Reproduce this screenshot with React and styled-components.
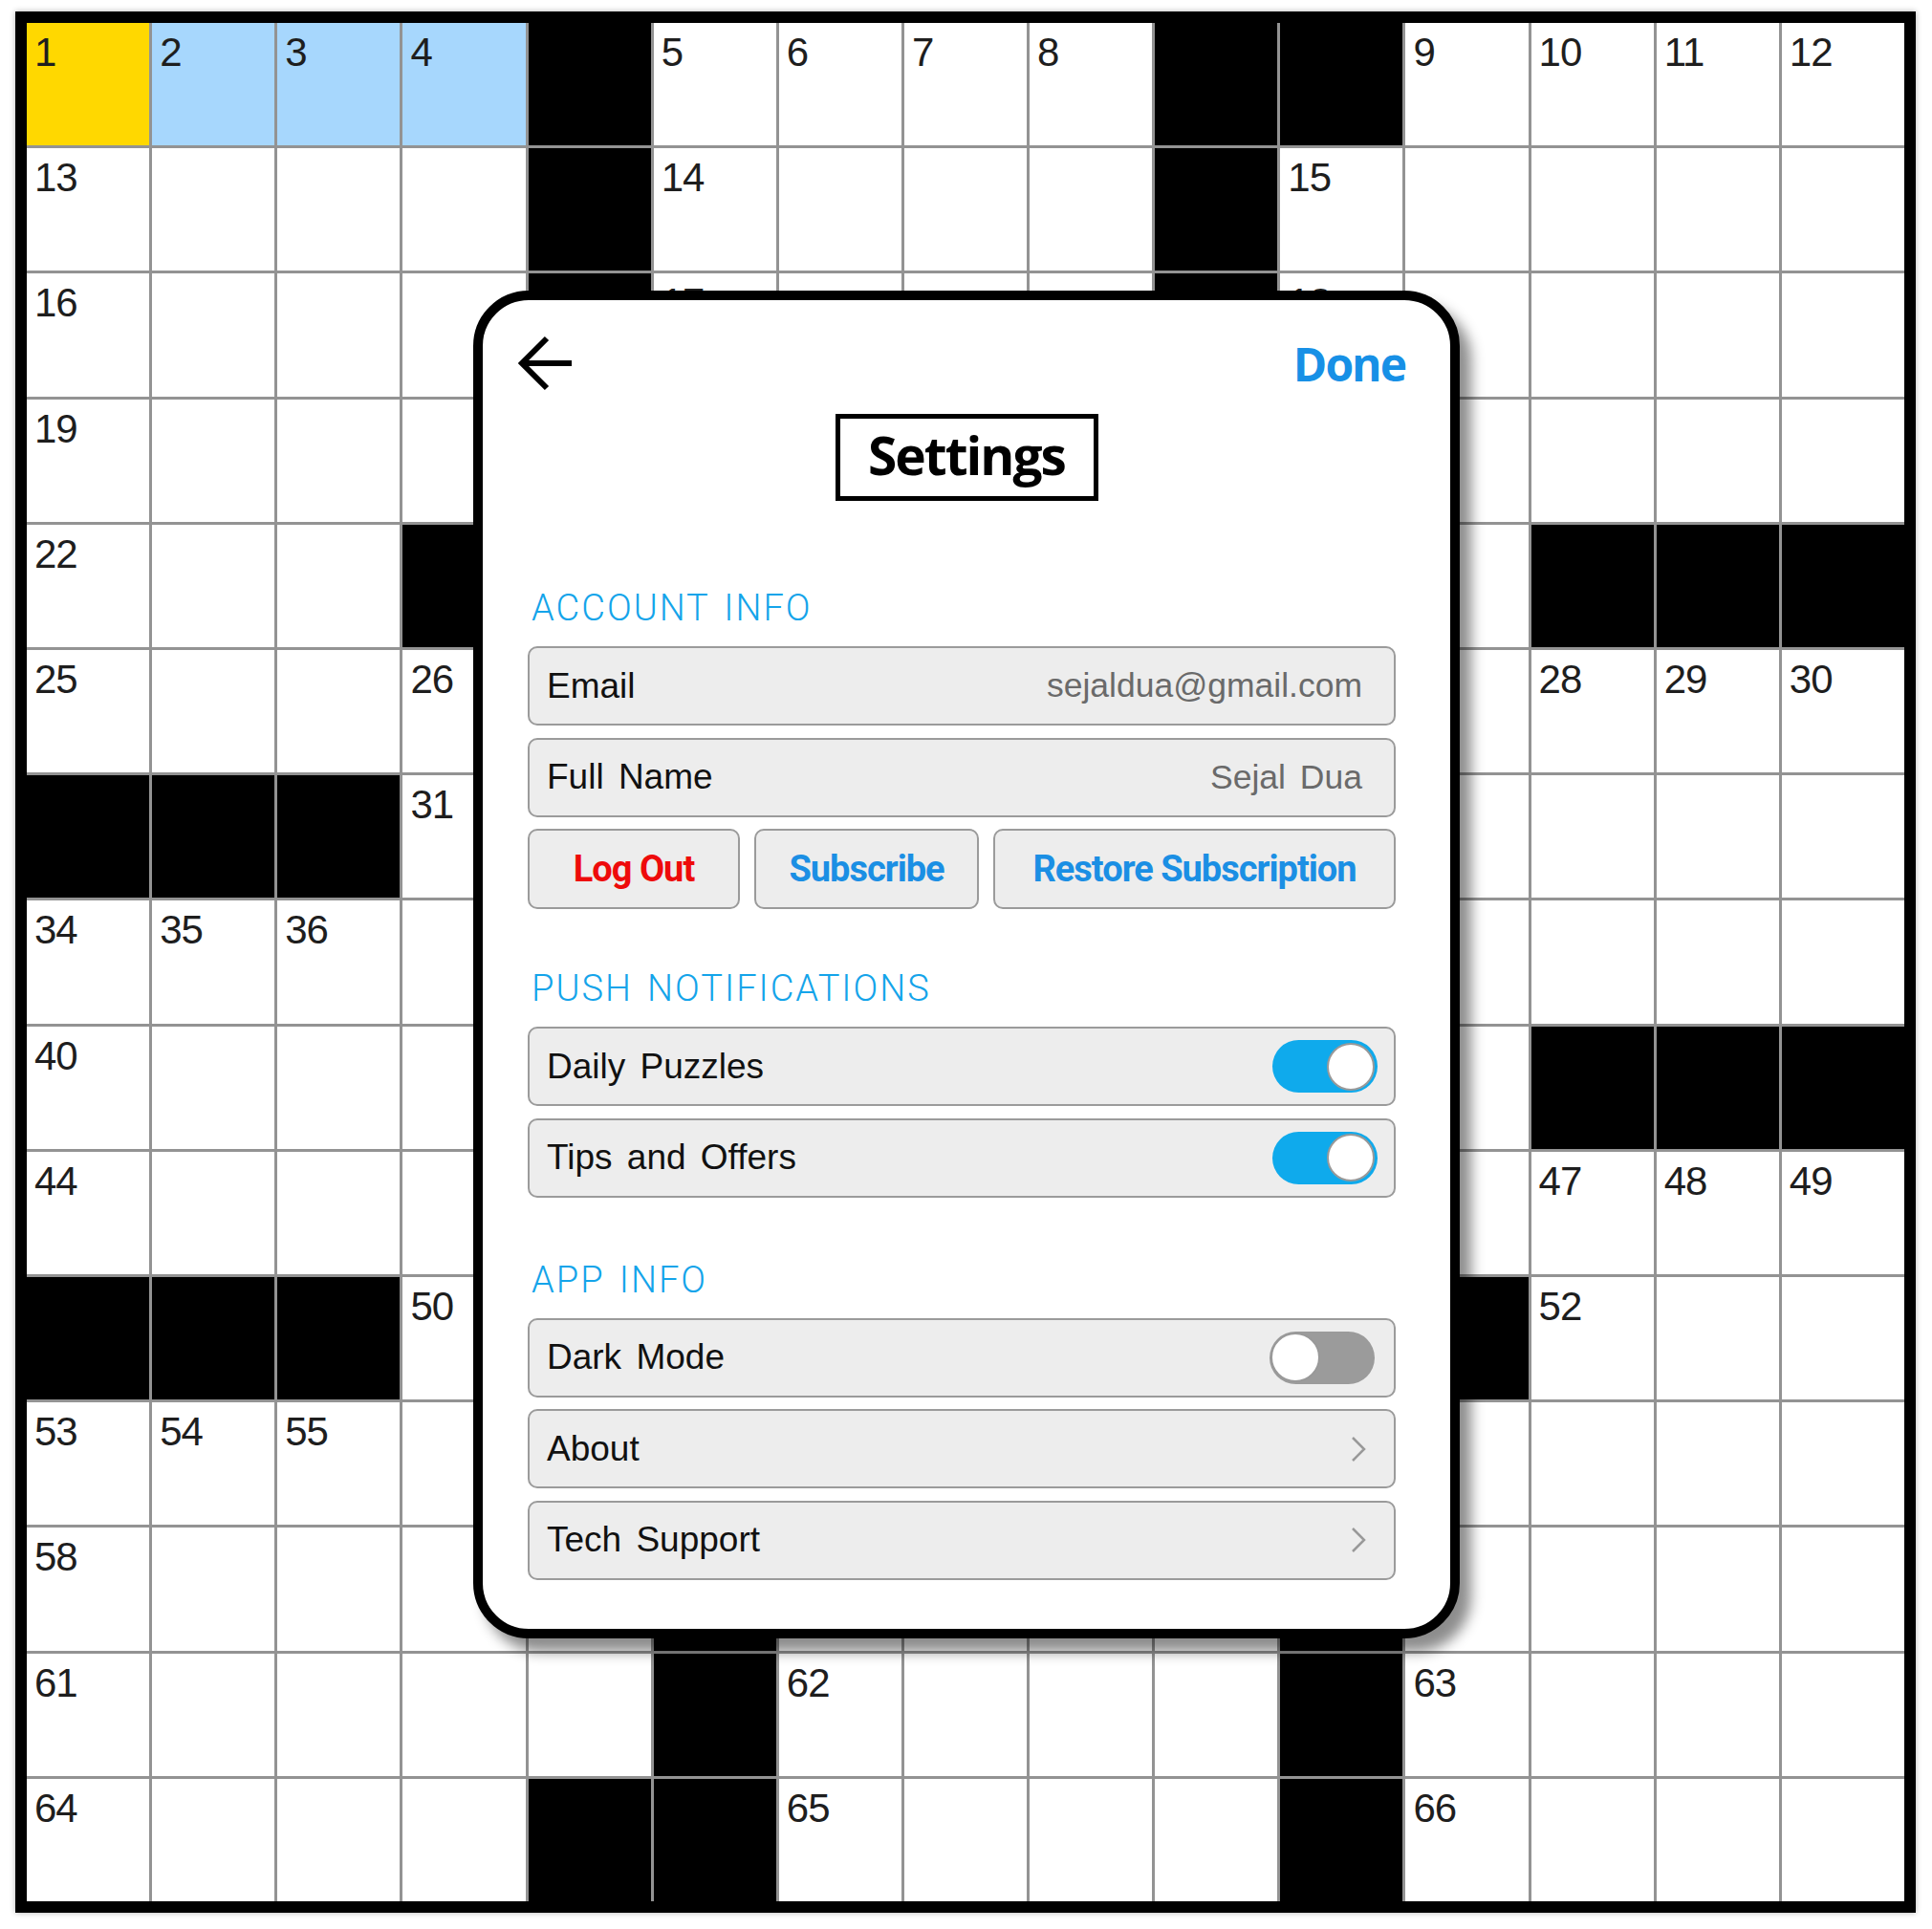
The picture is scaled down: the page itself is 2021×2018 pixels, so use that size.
import React from 'react'
import styled, { createGlobalStyle } from 'styled-components'

const GlobalStyle = createGlobalStyle`
  html, body {
    margin: 0;
    padding: 0;
    background: #fff;
  }
  body {
    width: 2021px;
    height: 2018px;
    overflow: hidden;
    font-family: "Liberation Sans", Arial, sans-serif;
  }
`

// black squares per row, column indexes
const BLACK = {
  0: [4, 9, 10],
  1: [4, 9],
  2: [4, 9],
  4: [3, 12, 13, 14],
  6: [0, 1, 2],
  8: [12, 13, 14],
  10: [0, 1, 2, 11],
  12: [5, 10],
  13: [5, 10],
  14: [4, 5, 10],
}

const NUMBERS = {
  '0,0': 1, '0,1': 2, '0,2': 3, '0,3': 4, '0,5': 5, '0,6': 6, '0,7': 7, '0,8': 8,
  '0,11': 9, '0,12': 10, '0,13': 11, '0,14': 12,
  '1,0': 13, '1,5': 14, '1,10': 15,
  '2,0': 16, '2,5': 17, '2,10': 18,
  '3,0': 19,
  '4,0': 22,
  '5,0': 25, '5,3': 26, '5,12': 28, '5,13': 29, '5,14': 30,
  '6,3': 31,
  '7,0': 34, '7,1': 35, '7,2': 36,
  '8,0': 40,
  '9,0': 44, '9,12': 47, '9,13': 48, '9,14': 49,
  '10,3': 50, '10,12': 52,
  '11,0': 53, '11,1': 54, '11,2': 55,
  '12,0': 58,
  '13,0': 61, '13,6': 62, '13,11': 63,
  '14,0': 64, '14,6': 65, '14,11': 66,
}

const cellTone = (r, c) => {
  if ((BLACK[r] || []).includes(c)) return 'black'
  if (r === 0 && c === 0) return 'focus'
  if (r === 0 && c < 4) return 'word'
  return 'open'
}

const tones = {
  black: '#000',
  focus: '#ffd800',
  word: '#a7d7fd',
  open: '#fff',
}

const Page = styled.div`
  position: relative;
  width: 2021px;
  height: 2018px;
  padding: 12px 0 0 16px;
  box-sizing: border-box;
`

const Board = styled.div`
  width: 1988px;
  height: 1989px;
  box-sizing: border-box;
  border: 12px solid #000;
  background: #939393;
  display: grid;
  grid-template-columns: repeat(15, 1fr);
  grid-template-rows: repeat(15, 1fr);
  gap: 3px;
  box-shadow: 0 0 6px rgba(0, 0, 0, 0.3);
`

const Cell = styled.div`
  background: ${p => tones[p.$tone]};
  padding: 10px 0 0 8px;
  font-family: "Liberation Sans", Arial, sans-serif;
  font-size: 42px;
  line-height: 1;
  letter-spacing: -1px;
  color: #1e1e1e;
`

const Sheet = styled.div`
  position: absolute;
  left: 495px;
  top: 304px;
  width: 1032px;
  height: 1410px;
  box-sizing: border-box;
  border: 10px solid #000;
  border-radius: 58px;
  background: #fff;
  box-shadow: 12px 14px 14px rgba(0, 0, 0, 0.45);
  padding: 38px 47px 0 47px;
  display: flex;
  flex-direction: column;
`

const TopBar = styled.div`
  display: flex;
  align-items: center;
  justify-content: space-between;
  height: 56px;
`

const BackButton = styled.svg`
  width: 60px;
  height: 60px;
  margin-left: -11px;
  display: block;
`

const Done = styled.span`
  font-family: "Open Sans", "Noto Sans", sans-serif;
  font-weight: 700;
  font-size: 48px;
  letter-spacing: -2px;
  color: #1790e6;
`

const TitleBox = styled.h1`
  align-self: center;
  margin: 25px 0 0;
  width: 275px;
  height: 91px;
  box-sizing: border-box;
  border: 5px solid #000;
  padding-bottom: 6px;
  display: flex;
  align-items: center;
  justify-content: center;
  font-family: "Open Sans", "Noto Sans", sans-serif;
  font-weight: 700;
  font-size: 55px;
  letter-spacing: -2px;
  color: #000;
`

const Sections = styled.div`
  display: flex;
  flex-direction: column;
  padding-right: 10px;
`

const SectionTitle = styled.h2`
  margin: ${p => p.$top}px 0 0 4px;
  height: 46px;
  line-height: 46px;
  font-family: Roboto, "Liberation Sans", sans-serif;
  font-weight: 300;
  font-size: 38px;
  letter-spacing: 2px;
  word-spacing: 4px;
  color: #14a4ea;
`

const Group = styled.div`
  margin-top: 17px;
  display: flex;
  flex-direction: column;
  gap: 12.5px;
`

const Row = styled.div`
  height: 83px;
  box-sizing: border-box;
  border: 2px solid #9b9b9b;
  border-radius: 10px;
  background: #ededed;
  display: flex;
  align-items: center;
  justify-content: space-between;
  padding: 0 ${p => p.$right}px 0 18px;
`

const Label = styled.span`
  font-family: "Liberation Sans", Arial, sans-serif;
  font-size: 37px;
  word-spacing: 5px;
  color: #111;
`

const Value = styled.span`
  font-family: "Liberation Sans", Arial, sans-serif;
  font-size: 35.5px;
  word-spacing: 5px;
  color: #6a6a6a;
`

const ButtonRow = styled.div`
  display: flex;
  gap: 15px;
`

const ActionButton = styled.button`
  width: ${p => p.$w}px;
  height: 84px;
  box-sizing: border-box;
  border: 2px solid #9b9b9b;
  border-radius: 10px;
  background: #ededed;
  font-family: Roboto, "Liberation Sans", sans-serif;
  font-weight: 700;
  font-size: 38px;
  letter-spacing: -1px;
  color: ${p => (p.$danger ? '#ee0b0b' : '#1b8fe4')};
  padding: 0;
`

const Track = styled.div`
  width: 110px;
  height: 55px;
  box-sizing: border-box;
  border-radius: 28px;
  background: ${p => (p.$on ? '#0faaec' : '#9b9b9b')};
  display: flex;
  align-items: center;
  justify-content: ${p => (p.$on ? 'flex-end' : 'flex-start')};
  padding: 0 ${p => (p.$on ? 3 : 1)}px;
`

const Knob = styled.div`
  width: ${p => (p.$on ? 50 : 52)}px;
  height: ${p => (p.$on ? 50 : 52)}px;
  box-sizing: border-box;
  border-radius: 50%;
  border: 2px solid #999;
  background: #fff;
`

const Chevron = styled.svg`
  width: 16px;
  height: 28px;
  display: block;
`

const Toggle = ({ on }) => (
  <Track $on={on}>
    <Knob $on={on} />
  </Track>
)

const Arrow = () => (
  <Chevron viewBox="0 0 16 28">
    <polyline points="2,2 14,14 2,26" fill="none" stroke="#999" strokeWidth="2.5" />
  </Chevron>
)

const rows = Array.from({ length: 15 }, (_, r) => r)

export default function App() {
  return (
    <Page>
      <GlobalStyle />
      <Board>
        {rows.map(r =>
          rows.map(c => {
            const tone = cellTone(r, c)
            return (
              <Cell key={r + '-' + c} $tone={tone}>
                {tone !== 'black' ? NUMBERS[r + ',' + c] : null}
              </Cell>
            )
          })
        )}
      </Board>

      <Sheet>
        <TopBar>
          <BackButton viewBox="0 0 60 60">
            <path d="M31 4 L5 30 L31 56 M5 30 H57" fill="none" stroke="#000" strokeWidth="6" />
          </BackButton>
          <Done>Done</Done>
        </TopBar>

        <TitleBox>Settings</TitleBox>

        <Sections>
          <SectionTitle $top={89}>ACCOUNT INFO</SectionTitle>
          <Group>
            <Row $right={33}>
              <Label>Email</Label>
              <Value>sejaldua@gmail.com</Value>
            </Row>
            <Row $right={33}>
              <Label>Full Name</Label>
              <Value>Sejal Dua</Value>
            </Row>
            <ButtonRow>
              <ActionButton $w={222} $danger>Log Out</ActionButton>
              <ActionButton $w={235}>Subscribe</ActionButton>
              <ActionButton $w={421}>Restore Subscription</ActionButton>
            </ButtonRow>
          </Group>

          <SectionTitle $top={60}>PUSH NOTIFICATIONS</SectionTitle>
          <Group>
            <Row $right={17}>
              <Label>Daily Puzzles</Label>
              <Toggle on />
            </Row>
            <Row $right={17}>
              <Label>Tips and Offers</Label>
              <Toggle on />
            </Row>
          </Group>

          <SectionTitle $top={63}>APP INFO</SectionTitle>
          <Group>
            <Row $right={20}>
              <Label>Dark Mode</Label>
              <Toggle on={false} />
            </Row>
            <Row $right={29}>
              <Label>About</Label>
              <Arrow />
            </Row>
            <Row $right={29}>
              <Label>Tech Support</Label>
              <Arrow />
            </Row>
          </Group>
        </Sections>
      </Sheet>
    </Page>
  )
}
